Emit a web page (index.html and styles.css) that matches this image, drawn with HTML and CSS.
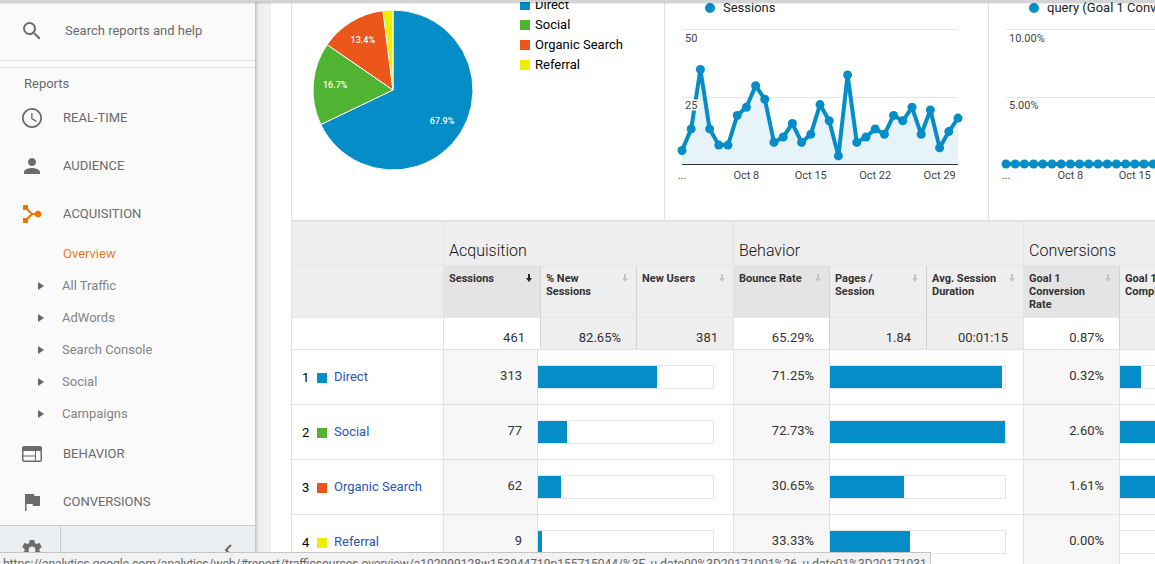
FILE: index.html
```html
<!DOCTYPE html>
<html lang="en">
<head>
<meta charset="utf-8">
<title>Acquisition Overview</title>
<link rel="stylesheet" href="styles.css">
</head>
<body>
<div class="app">
  <nav class="sidebar" aria-label="Reports">
    <label class="search">
      <svg class="icon" viewBox="0 0 24 24"><path d="M15.5 14h-.79l-.28-.27A6.47 6.47 0 0 0 16 9.5 6.5 6.5 0 1 0 9.5 16c1.61 0 3.09-.59 4.23-1.57l.27.28v.79l5 4.99L20.49 19l-4.99-5zm-6 0C7.01 14 5 11.99 5 9.5S7.01 5 9.5 5 14 7.01 14 9.5 11.99 14 9.5 14z"/></svg>
      <input class="search-input" type="text" placeholder="Search reports and help" aria-label="Search reports and help">
    </label>
    <div class="nav-body">
      <h2 class="nav-title">Reports</h2>
      <a class="nav-item" href="#"><svg class="icon" viewBox="0 0 24 24"><path d="M11.99 2C6.47 2 2 6.48 2 12s4.47 10 9.99 10C17.52 22 22 17.52 22 12S17.52 2 11.99 2zM12 20.3a8.3 8.3 0 1 1 0-16.6 8.3 8.3 0 0 1 0 16.6zM12.500 7H11.200v6l4.900 2.900.7-1.100-4.300-2.600z"/></svg>REAL-TIME</a>
      <a class="nav-item" href="#"><svg class="icon" viewBox="0 0 24 24"><path d="M12 12c2.21 0 4-1.79 4-4s-1.79-4-4-4-4 1.79-4 4 1.79 4 4 4zm0 2c-2.67 0-8 1.34-8 4v2h16v-2c0-2.66-5.33-4-8-4z"/></svg>AUDIENCE</a>
      <a class="nav-item" href="#"><svg class="icon icon-active" viewBox="0 0 24 24"><path d="M3 3h5v5H3zM3 16h5v5H3z"/><circle cx="18" cy="12" r="3.200"/><path d="M6 6l6 6-6 6M12 12h6" fill="none" stroke="#f57200" stroke-width="2"/></svg>ACQUISITION</a>
      <a class="sub-item active" href="#">Overview</a>
      <a class="sub-item" href="#"><svg class="caret" viewBox="0 0 6 8"><path d="M0 0l6 4-6 4z"/></svg>All Traffic</a>
      <a class="sub-item" href="#"><svg class="caret" viewBox="0 0 6 8"><path d="M0 0l6 4-6 4z"/></svg>AdWords</a>
      <a class="sub-item" href="#"><svg class="caret" viewBox="0 0 6 8"><path d="M0 0l6 4-6 4z"/></svg>Search Console</a>
      <a class="sub-item" href="#"><svg class="caret" viewBox="0 0 6 8"><path d="M0 0l6 4-6 4z"/></svg>Social</a>
      <a class="sub-item" href="#"><svg class="caret" viewBox="0 0 6 8"><path d="M0 0l6 4-6 4z"/></svg>Campaigns</a>
      <a class="nav-item" href="#"><svg class="icon" viewBox="0 0 24 24"><path fill-rule="evenodd" d="M20 4H4c-1.100 0-2 .9-2 2v12c0 1.100.9 2 2 2h16c1.100 0 2-.9 2-2V6c0-1.100-.9-2-2-2zM15 18.500H3.500V14.500H15zM15 13.500H3.500V9H15zM20.500 18.500H16V9h4.500z"/></svg>BEHAVIOR</a>
      <a class="nav-item" href="#"><svg class="icon" viewBox="0 0 24 24"><path d="M14.400 6L14 4H5v17h1.500v-7h6.100l.4 2h7V6z"/></svg>CONVERSIONS</a>
    </div>
    <div class="nav-foot">
      <button class="foot-admin" aria-label="Admin"><svg class="icon" viewBox="0 0 24 24"><path d="M19.430 12.980c.04-.32.070-.64.070-.98s-.03-.66-.07-.98l2.110-1.650c.19-.15.240-.42.120-.64l-2-3.460c-.12-.22-.39-.3-.61-.22l-2.490 1c-.52-.4-1.080-.73-1.690-.98l-.38-2.650C14.460 2.180 14.250 2 14 2h-4c-.25 0-.46.180-.49.420l-.38 2.650c-.61.250-1.170.590-1.690.980l-2.490-1c-.23-.09-.49 0-.61.220l-2 3.460c-.13.220-.07.490.12.640l2.110 1.650c-.04.320-.07.650-.07.980s.03.660.070.980l-2.110 1.650c-.19.150-.24.420-.12.640l2 3.460c.12.220.390.300.610.220l2.490-1c.520.400 1.080.730 1.690.980l.38 2.650c.03.240.240.420.490.420h4c.250 0 .460-.18.490-.42l.380-2.650c.610-.25 1.170-.59 1.690-.98l2.490 1c.23.090.490 0 .610-.22l2-3.460c.12-.22.070-.49-.12-.64l-2.110-1.650zM12 15.500c-1.930 0-3.500-1.570-3.500-3.500s1.570-3.500 3.500-3.500 3.500 1.570 3.500 3.500-1.570 3.500-3.500 3.500z"/></svg></button>
      <button class="foot-collapse" aria-label="Collapse menu"><svg class="chevron" viewBox="0 0 8 12"><path d="M7 1L2 6l5 5" fill="none" stroke="#666" stroke-width="2"/></svg></button>
    </div>
  </nav>

  <main class="content">
    <section class="report">
      <div class="charts">
        <div class="card pie-card">
          <svg class="pie" viewBox="-80 -80 160 160" role="img" aria-label="Top channels"></svg>
          <ul class="legend">
            <li><i class="swatch c1"></i>Direct</li>
            <li><i class="swatch c2"></i>Social</li>
            <li><i class="swatch c3"></i>Organic Search</li>
            <li><i class="swatch c4"></i>Referral</li>
          </ul>
        </div>
        <div class="card">
          <p class="series"><i class="dot"></i>Sessions</p>
          <svg class="line" id="sessions" viewBox="0 0 323 172"></svg>
        </div>
        <div class="card">
          <p class="series"><i class="dot"></i>query (Goal 1 Conversion Rate)</p>
          <svg class="line" id="goal" viewBox="0 0 323 172"></svg>
        </div>
      </div>

      <table class="data">
        <colgroup>
          <col class="w-name"><col class="w-first"><col class="w-rest"><col class="w-key"><col class="w-col">
          <col class="w-key"><col class="w-col"><col class="w-col">
          <col class="w-key"><col class="w-col"><col class="w-col">
        </colgroup>
        <thead>
          <tr class="groups"><td></td><th colspan="4">Acquisition</th><th colspan="3">Behavior</th><th colspan="3">Conversions</th></tr>
          <tr class="heads">
            <td></td>
            <th class="key" colspan="2"><div class="head"><span>Sessions</span><svg class="sort on" viewBox="0 0 6 8"><path d="M2 0h2v4h2L3 8 0 4h2z"/></svg></div></th>
            <th><div class="head"><span>% New Sessions</span><svg class="sort" viewBox="0 0 6 8"><path d="M2 0h2v4h2L3 8 0 4h2z"/></svg></div></th>
            <th><div class="head"><span>New Users</span><svg class="sort" viewBox="0 0 6 8"><path d="M2 0h2v4h2L3 8 0 4h2z"/></svg></div></th>
            <th class="key"><div class="head"><span>Bounce Rate</span><svg class="sort" viewBox="0 0 6 8"><path d="M2 0h2v4h2L3 8 0 4h2z"/></svg></div></th>
            <th><div class="head"><span>Pages / Session</span><svg class="sort" viewBox="0 0 6 8"><path d="M2 0h2v4h2L3 8 0 4h2z"/></svg></div></th>
            <th><div class="head"><span>Avg. Session Duration</span><svg class="sort" viewBox="0 0 6 8"><path d="M2 0h2v4h2L3 8 0 4h2z"/></svg></div></th>
            <th class="key"><div class="head"><span>Goal 1 Conversion Rate</span><svg class="sort" viewBox="0 0 6 8"><path d="M2 0h2v4h2L3 8 0 4h2z"/></svg></div></th>
            <th><div class="head"><span>Goal 1 Completions</span><svg class="sort" viewBox="0 0 6 8"><path d="M2 0h2v4h2L3 8 0 4h2z"/></svg></div></th>
            <th><div class="head"><span>Goal 1 Value</span><svg class="sort" viewBox="0 0 6 8"><path d="M2 0h2v4h2L3 8 0 4h2z"/></svg></div></th>
          </tr>
        </thead>
        <tbody>
          <tr class="totals"><td></td><td class="key" colspan="2">461</td><td>82.65%</td><td>381</td><td class="key">65.29%</td><td>1.84</td><td>00:01:15</td><td class="key">0.87%</td><td>4</td><td>$0.00</td></tr>
          <tr class="row">
            <td><div class="channel"><span class="rank">1</span><i class="swatch c1"></i><a href="#">Direct</a></div></td>
            <td class="num">313</td><td class="bar-cell" colspan="3"><div class="bar"><div class="fill" style="width:68%"></div></div></td>
            <td class="num">71.25%</td><td class="bar-cell" colspan="2"><div class="bar"><div class="fill" style="width:98%"></div></div></td>
            <td class="num">0.32%</td><td class="bar-cell" colspan="2"><div class="bar"><div class="fill" style="width:12%"></div></div></td>
          </tr>
          <tr class="row">
            <td><div class="channel"><span class="rank">2</span><i class="swatch c2"></i><a href="#">Social</a></div></td>
            <td class="num">77</td><td class="bar-cell" colspan="3"><div class="bar"><div class="fill" style="width:16.7%"></div></div></td>
            <td class="num">72.73%</td><td class="bar-cell" colspan="2"><div class="bar"><div class="fill" style="width:100%"></div></div></td>
            <td class="num">2.60%</td><td class="bar-cell" colspan="2"><div class="bar"><div class="fill" style="width:100%"></div></div></td>
          </tr>
          <tr class="row">
            <td><div class="channel"><span class="rank">3</span><i class="swatch c3"></i><a href="#">Organic Search</a></div></td>
            <td class="num">62</td><td class="bar-cell" colspan="3"><div class="bar"><div class="fill" style="width:13.4%"></div></div></td>
            <td class="num">30.65%</td><td class="bar-cell" colspan="2"><div class="bar"><div class="fill" style="width:42.1%"></div></div></td>
            <td class="num">1.61%</td><td class="bar-cell" colspan="2"><div class="bar"><div class="fill" style="width:62%"></div></div></td>
          </tr>
          <tr class="row">
            <td><div class="channel"><span class="rank">4</span><i class="swatch c4"></i><a href="#">Referral</a></div></td>
            <td class="num">9</td><td class="bar-cell" colspan="3"><div class="bar"><div class="fill" style="width:2%"></div></div></td>
            <td class="num">33.33%</td><td class="bar-cell" colspan="2"><div class="bar"><div class="fill" style="width:45.8%"></div></div></td>
            <td class="num">0.00%</td><td class="bar-cell" colspan="2"><div class="bar"></div></td>
          </tr>
        </tbody>
      </table>
    </section>
  </main>
</div>
<div class="top-edge"></div>
<div class="status">https://analytics.google.com/analytics/web/#report/trafficsources-overview/a102999128w153944719p155715044/%3F_u.date00%3D20171001%26_u.date01%3D20171031</div>
<script src="charts.js"></script>
</body>
</html>
```
FILE: styles.css
```css
* { box-sizing: border-box; }
body {
  margin: 0;
  height: 100vh;
  overflow: hidden;
  font: 13px/20px Roboto, "Liberation Sans", sans-serif;
  color: #222;
  background: #fff;
}
a { text-decoration: none; }
button { border: 0; padding: 0; background: none; }
.app { display: flex; height: 100vh; }

.sidebar {
  position: relative;
  z-index: 1;
  display: flex;
  flex-direction: column;
  flex: 0 0 256px;
  background: #fafafa;
  border-right: 1px solid #c8c8c8;
  box-shadow: 1px 0 3px rgba(0, 0, 0, .18);
}
.icon { flex: none; width: 24px; height: 24px; fill: #6b6b6b; }
.icon-active { fill: #f57200; }
.search {
  display: flex;
  align-items: center;
  gap: 21px;
  flex: none;
  height: 61px;
  padding: 2px 0 0 20px;
  border-bottom: 1px solid #e0e0e0;
}
.search-input {
  flex: 1;
  min-width: 0;
  padding: 0;
  border: 0;
  outline: 0;
  background: none;
  font: inherit;
  color: #6b6b6b;
}
.search-input::placeholder { color: #6b6b6b; opacity: 1; }
.nav-body {
  flex: 1;
  min-height: 0;
  margin-top: 6px;
  padding-top: 6px;
  border-top: 1px solid #e0e0e0;
}
.nav-title { margin: 0; padding-left: 24px; font-size: 13px; font-weight: 400; color: #6b6b6b; }
.nav-item {
  display: flex;
  align-items: center;
  gap: 19px;
  height: 48px;
  padding-left: 20px;
  color: #6b6b6b;
}
.sub-item {
  display: flex;
  align-items: center;
  gap: 18px;
  height: 32px;
  padding-left: 38px;
  color: #858585;
}
.sub-item.active { padding-left: 63px; color: #ef7b22; }
.caret { width: 6px; height: 8px; fill: #666; }
.nav-foot {
  display: flex;
  flex: none;
  height: 39px;
  border-top: 1px solid #ccc;
  background: #eceff1;
}
.foot-admin { width: 61px; padding: 12px 16px 0 20px; border-right: 1px solid #ccc; overflow: hidden; }
.foot-collapse { flex: 1; padding: 12px 23px 0 0; text-align: right; }
.chevron { width: 8px; height: 12px; }

.content {
  flex: 1;
  min-width: 0;
  overflow: hidden;
  border-left: 15px solid #f0f0f0;
  padding-left: 20px;
}
.report { width: 100%; min-width: 1022px; border-left: 1px solid #e2e2e2; }
.charts { display: grid; grid-template-columns: 373px 1fr 1fr; height: 220px; }
.card { min-width: 0; border-right: 1px solid #e2e2e2; overflow: hidden; }
.pie-card { display: flex; align-items: center; gap: 47px; padding: 0 0 40px 21px; }
.pie { flex: none; width: 160px; height: 160px; }
.pie text { font-size: 9px; font-weight: 500; fill: #fff; text-anchor: middle; }
.legend { align-self: flex-start; margin: -5px 0 0; padding: 0; list-style: none; color: #000; }
.legend li { display: flex; align-items: center; gap: 5px; }
.swatch { flex: none; width: 10px; height: 10px; }
.c1 { background: #058dc7; }
.c2 { background: #50b432; }
.c3 { background: #ed561b; }
.c4 { background: #edef00; }
.series {
  display: flex;
  align-items: center;
  gap: 8px;
  margin: -2px 0 0;
  padding-left: 40px;
  white-space: nowrap;
}
.dot { flex: none; width: 10px; height: 10px; border-radius: 50%; background: #058dc7; }
.line { display: block; width: 323px; height: 172px; }
.line text { font-size: 11px; fill: #444; }
.halo { stroke: #fff; stroke-width: 3px; paint-order: stroke; }
.mid { text-anchor: middle; }

.data { width: 100%; table-layout: fixed; border-collapse: separate; border-spacing: 0; color: #333; }
.w-name { width: 151px; }
.w-first { width: 94px; }
.w-rest { width: 3px; }
.w-key { width: 96px; }
.w-col { width: 97px; }
.data td, .data th { padding: 0; border-left: 1px solid #e2e2e2; }
.data td:first-child { border-left: 0; }
.groups td, .groups th {
  height: 46px;
  border-top: 2px solid #e2e2e2;
  border-bottom: 1px solid #e6e6e6;
  background: #eee;
}
.data .groups th {
  padding: 14px 0 0 5px;
  text-align: left;
  font-size: 16px;
  line-height: 20px;
  font-weight: 300;
  color: #111;
}
.heads td, .heads th { height: 52px; background: #eee; vertical-align: top; border-bottom: 1px solid #e6e6e6; }
.data .heads th { padding: 6px 8px 0 5px; font-size: 11px; line-height: 13px; font-weight: 700; text-align: left; }
.data .heads th:not(.key), .data .totals td:not(.key):not(:first-child) { border-left-color: #d2d2d2; }
.heads .key { background: #e4e4e4; }
.head { display: flex; justify-content: space-between; }
.sort { flex: none; width: 6px; height: 8px; margin-top: 2px; fill: #c4c4c4; }
.sort.on { fill: #222; }
.data .totals td {
  height: 32px;
  padding: 8px 15px 0 0;
  text-align: right;
  background: #eee;
  border-bottom: 1px solid #e2e2e2;
}
.data .totals .key, .data .totals td:first-child { background: #fff; }
.row td { height: 55px; border-bottom: 1px solid #e2e2e2; }
.channel { display: flex; align-items: center; gap: 7px; padding-left: 10px; }
.rank { width: 8px; padding-top: 2px; color: #000; }
.channel .swatch { margin-top: 2px; }
.channel a { color: #2a56b9; }
.data .num { padding: 0 15px 2px 0; text-align: right; background: #f7f7f7; }
.data .bar-cell { border-left-color: #e2e2e2; }
.bar { width: 176px; height: 24px; border: 1px solid #e6e6e6; border-left: 0; }
.fill { height: 22px; background: #058dc7; }

.top-edge {
  position: fixed;
  z-index: 2;
  inset: 0 0 auto;
  height: 2px;
  background: #d4d4d4;
  box-shadow: 0 1px 2px rgba(0, 0, 0, .25);
}
.status {
  position: fixed;
  z-index: 3;
  left: 0;
  bottom: 0;
  height: 12px;
  padding: 0 3px;
  border: 1px solid #c4c4c4;
  border-width: 1px 1px 0 0;
  background: #f2f2f2;
  overflow: hidden;
  font: 12px/22px Roboto, "Liberation Sans", sans-serif;
  color: #666;
  white-space: nowrap;
}
```
FILE: charts.js
```js
const NS = "http://www.w3.org/2000/svg";

function add(parent, tag, attrs, text) {
  const el = document.createElementNS(NS, tag);
  for (const key in attrs) el.setAttribute(key, attrs[key]);
  if (text) el.textContent = text;
  parent.appendChild(el);
  return el;
}

function drawPie(svg, slices) {
  const r = 80;
  const at = (share, radius) => {
    const a = share * 2 * Math.PI;
    return [Math.sin(a) * radius, -Math.cos(a) * radius];
  };
  let from = 0;
  for (const { share, color, label } of slices) {
    const to = from + share;
    const [x1, y1] = at(from, r);
    const [x2, y2] = at(to, r);
    add(svg, "path", {
      d: `M0 0L${x1} ${y1}A${r} ${r} 0 ${share > 0.5 ? 1 : 0} 1 ${x2} ${y2}Z`,
      fill: color, stroke: "#fff", "stroke-width": 1
    });
    if (label) {
      const [x, y] = at((from + to) / 2, 58);
      add(svg, "text", { x, y: y + 3 }, label);
    }
    from = to;
  }
}

function drawLine(svg, values, max, labels) {
  const left = 17, right = 293, top = 11, base = 146;
  const x = i => left + (right - left) * i / (values.length - 1);
  const y = v => base - (base - top) * v / max;
  const line = values.map((v, i) => `${x(i)},${y(v)}`).join(" ");

  for (const v of [max, max / 2])
    add(svg, "path", { d: `M${left} ${Math.round(y(v)) + 0.5}H${right}`, stroke: "#e6e6e6" });
  add(svg, "polygon", { points: `${left},${base} ${line} ${right},${base}`, fill: "#e6f3f9" });
  add(svg, "path", { d: `M${left} ${base + 0.5}H${right}`, stroke: "#333" });
  add(svg, "polyline", { points: line, fill: "none", stroke: "#058dc7", "stroke-width": 4, "stroke-linejoin": "round" });
  values.forEach((v, i) => add(svg, "circle", { cx: x(i), cy: y(v), r: 4.5, fill: "#058dc7" }));

  add(svg, "text", { x: left + 3, y: 24, class: "halo" }, labels[0]);
  add(svg, "text", { x: left + 3, y: 91, class: "halo" }, labels[1]);
  add(svg, "text", { x: left, y: 161, class: "mid" }, "...");
  for (const day of [8, 15, 22, 29])
    add(svg, "text", { x: x(day - 1), y: 161, class: "mid" }, "Oct " + day);
}

drawPie(document.querySelector(".pie"), [
  { share: 0.679, color: "#058dc7", label: "67.9%" },
  { share: 0.167, color: "#50b432", label: "16.7%" },
  { share: 0.134, color: "#ed561b", label: "13.4%" },
  { share: 0.02, color: "#edef00" }
]);

const sessions = [5, 13, 35, 13, 7, 7, 18, 21, 29, 24, 8, 10, 15, 8, 11, 22,
  16, 3, 33, 8, 10, 13, 11, 18, 16, 21, 11, 20, 6, 12, 17];
drawLine(document.getElementById("sessions"), sessions, 50, ["50", "25"]);
drawLine(document.getElementById("goal"), sessions.map(() => 0), 10, ["10.00%", "5.00%"]);
```
